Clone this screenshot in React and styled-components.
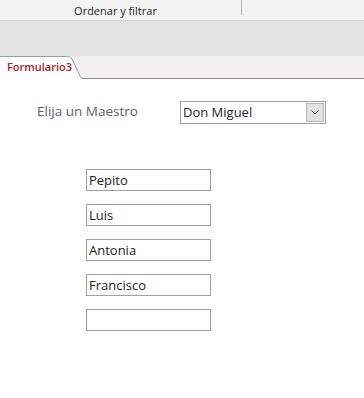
import React from 'react';
import styled, { createGlobalStyle } from 'styled-components';

const GlobalStyle = createGlobalStyle`
  html, body {
    margin: 0;
    padding: 0;
    background: #ffffff;
    font-family: "Open Sans", "Noto Sans", sans-serif;
  }
`;

const Page = styled.div`
  width: 364px;
  height: 398px;
  display: flex;
  flex-direction: column;
  overflow: hidden;
  background: #ffffff;
`;

const Ribbon = styled.div`
  height: 20px;
  background: #f3f3f3;
  border-bottom: 1px solid #d2d2d2;
  display: grid;
  grid-template-columns: 241px 1px 1fr;
  align-items: start;
`;

const GroupLabel = styled.div`
  font-size: 11px;
  color: #262626;
  text-align: center;
  line-height: 16px;
  padding: 3px 10px 0 0;
`;

const GroupSeparator = styled.div`
  height: 15px;
  background: #b5b5b5;
`;

const Band = styled.div`
  height: 35px;
  background: #e3e3e3;
`;

const TabStrip = styled.div`
  height: 22px;
  background: #f2f1f0;
  border-bottom: 1px solid #8c8c8c;
  display: flex;
  align-items: flex-end;
`;

const Tab = styled.div`
  position: relative;
  height: 23px;
  width: 82px;
  margin-bottom: -1px;
`;

const TabShape = styled.svg`
  position: absolute;
  left: 0;
  top: 0;
`;

const TabText = styled.span`
  position: relative;
  display: block;
  padding: 3px 0 0 7px;
  font-size: 11px;
  font-weight: 600;
  color: #a4262c;
  line-height: 16px;
`;

const Form = styled.div`
  flex: 1;
  display: flex;
  flex-direction: column;
  padding: 22px 0 0 37px;
`;

const ChooserRow = styled.div`
  display: grid;
  grid-template-columns: 143px 146px;
  align-items: center;
`;

const Label = styled.span`
  font-size: 13.5px;
  color: #5a6270;
  line-height: 18px;
  padding-bottom: 3px;
`;

const Combo = styled.div`
  height: 21px;
  border: 1px solid #a0a0a0;
  display: flex;
  align-items: stretch;
  background: #fff;
`;

const ComboValue = styled.span`
  flex: 1;
  font-size: 13px;
  color: #1e1e1e;
  line-height: 21px;
  padding-left: 2px;
`;

const ComboButton = styled.div`
  width: 16px;
  margin: 1px;
  background: #e1e1e1;
  border: 1px solid #b4b4b4;
  display: flex;
  align-items: center;
  justify-content: center;
`;

const Fields = styled.div`
  display: flex;
  flex-direction: column;
  gap: 13px;
  margin-top: 45px;
  margin-left: 49px;
`;

const Field = styled.div`
  width: 121px;
  height: 20px;
  border: 1px solid #a0a0a0;
  font-size: 13px;
  color: #1e1e1e;
  line-height: 20px;
  padding-left: 2px;
  box-sizing: content-box;
`;

const names = ['Pepito', 'Luis', 'Antonia', 'Francisco', ''];

export default function App() {
  return (
    <Page>
      <GlobalStyle />
      <Ribbon>
        <GroupLabel>Ordenar y filtrar</GroupLabel>
        <GroupSeparator />
        <div />
      </Ribbon>
      <Band />
      <TabStrip>
        <Tab>
          <TabShape width="82" height="23" viewBox="0 0 82 23">
            <path d="M0 0.5 H67 Q70 0.5 72 3 L80 20 Q81.5 22.5 82 22.5 V23 H0 Z" fill="#fdfdfd" />
            <path d="M0 0.5 H67 Q70 0.5 72 3 L80 20 Q81.5 22.5 82 22.5" fill="none" stroke="#9a9a9a" strokeWidth="1" />
          </TabShape>
          <TabText>Formulario3</TabText>
        </Tab>
      </TabStrip>
      <Form>
        <ChooserRow>
          <Label>Elija un Maestro</Label>
          <Combo>
            <ComboValue>Don Miguel</ComboValue>
            <ComboButton>
              <svg width="8" height="5" viewBox="0 0 8 5">
                <path d="M0.5 0.5 L4 4 L7.5 0.5" fill="none" stroke="#555" strokeWidth="1" />
              </svg>
            </ComboButton>
          </Combo>
        </ChooserRow>
        <Fields>
          {names.map((n, i) => (
            <Field key={i}>{n}</Field>
          ))}
        </Fields>
      </Form>
    </Page>
  );
}
